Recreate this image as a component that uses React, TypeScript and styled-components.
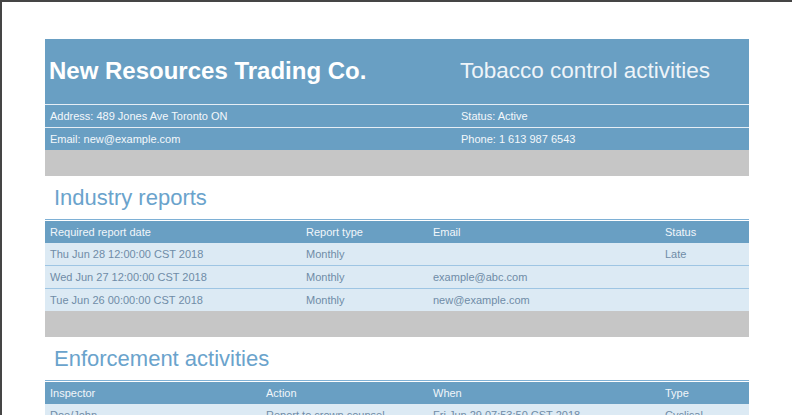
import React from 'react';
import styled, { createGlobalStyle } from 'styled-components';

const GlobalStyle = createGlobalStyle`
  html, body {
    margin: 0;
    padding: 0;
    overflow: hidden;
    background: #ffffff;
    font-family: "Liberation Sans", Arial, sans-serif;
  }
`;

const Page = styled.div`
  border-top: 2px solid #454545;
  border-left: 2px solid #454545;
  padding: 37px 43px 40px 43px;
  width: 704px;
  min-height: 600px;
  background: #ffffff;
`;

const Card = styled.div`
  background: #699fc3;
  color: #f4f8fb;
`;

const TitleRow = styled.div`
  display: grid;
  grid-template-columns: 411px 1fr;
  padding: 18px 0 19px;
  border-bottom: 1px solid #e6eef5;
`;

const CompanyName = styled.div`
  padding-left: 4px;
  font-size: 24px;
  line-height: 28px;
  font-weight: bold;
  color: #ffffff;
`;

const ReportTitle = styled.div`
  padding-left: 4px;
  font-size: 22.5px;
  line-height: 28px;
  color: #eef4f9;
`;

const InfoRow = styled.div<{ $last?: boolean }>`
  display: grid;
  grid-template-columns: 411px 1fr;
  height: 22px;
  align-items: center;
  font-size: 11px;
  border-bottom: ${({ $last }) => ($last ? 'none' : '1px solid #e6eef5')};
`;

const InfoCell = styled.div`
  padding-left: 5px;
`;

const GreyBand = styled.div`
  height: 26px;
  background: #c6c6c6;
`;

const SectionTitle = styled.h2`
  margin: 0;
  padding: 9px 9px 9px;
  font-size: 22px;
  line-height: 25px;
  font-weight: normal;
  color: #6aa3cc;
`;

const Table = styled.div`
  border-top: 1px solid #7eb0d5;
  padding-top: 1px;
`;

const Row = styled.div<{ $cols: string; $head?: boolean; $last?: boolean }>`
  display: grid;
  grid-template-columns: ${({ $cols }) => $cols};
  height: 22px;
  align-items: center;
  font-size: 11px;
  background: ${({ $head }) => ($head ? '#699fc3' : '#dceaf4')};
  color: ${({ $head }) => ($head ? '#f1f6fa' : '#6f8ca7')};
  border-bottom: ${({ $head, $last }) => ($head || $last ? 'none' : '1px solid #9ec5e3')};
`;

const Cell = styled.div`
  padding-left: 5px;
  white-space: nowrap;
  overflow: hidden;
`;

type Section = {
  title: string;
  cols: string;
  head: string[];
  rows: string[][];
};

const sections: Section[] = [
  {
    title: 'Industry reports',
    cols: '256px 127px 232px 1fr',
    head: ['Required report date', 'Report type', 'Email', 'Status'],
    rows: [
      ['Thu Jun 28 12:00:00 CST 2018', 'Monthly', '', 'Late'],
      ['Wed Jun 27 12:00:00 CST 2018', 'Monthly', 'example@abc.com', ''],
      ['Tue Jun 26 00:00:00 CST 2018', 'Monthly', 'new@example.com', ''],
    ],
  },
  {
    title: 'Enforcement activities',
    cols: '216px 167px 232px 1fr',
    head: ['Inspector', 'Action', 'When', 'Type'],
    rows: [
      ['Doe/John', 'Report to crown counsel', 'Fri Jun 29 07:53:50 CST 2018', 'Cyclical'],
      ['Smith/Jane', 'Warning issued', 'Thu Jun 28 10:12:00 CST 2018', 'Complaint'],
    ],
  },
];

const App: React.FC = () => {
  return (
    <>
      <GlobalStyle />
      <Page>
        <Card>
          <TitleRow>
            <CompanyName>New Resources Trading Co.</CompanyName>
            <ReportTitle>Tobacco control activities</ReportTitle>
          </TitleRow>
          <InfoRow>
            <InfoCell>Address: 489 Jones Ave Toronto ON</InfoCell>
            <InfoCell>Status: Active</InfoCell>
          </InfoRow>
          <InfoRow $last>
            <InfoCell>Email: new@example.com</InfoCell>
            <InfoCell>Phone: 1 613 987 6543</InfoCell>
          </InfoRow>
        </Card>
        <GreyBand />

        {sections.map((s) => (
          <div key={s.title}>
            <SectionTitle>{s.title}</SectionTitle>
            <Table>
              <Row $cols={s.cols} $head>
                {s.head.map((h) => (
                  <Cell key={h}>{h}</Cell>
                ))}
              </Row>
              {s.rows.map((r, i) => (
                <Row key={i} $cols={s.cols} $last={i === s.rows.length - 1}>
                  {r.map((c, j) => (
                    <Cell key={j}>{c}</Cell>
                  ))}
                </Row>
              ))}
            </Table>
            <GreyBand />
          </div>
        ))}
      </Page>
    </>
  );
};

export default App;
